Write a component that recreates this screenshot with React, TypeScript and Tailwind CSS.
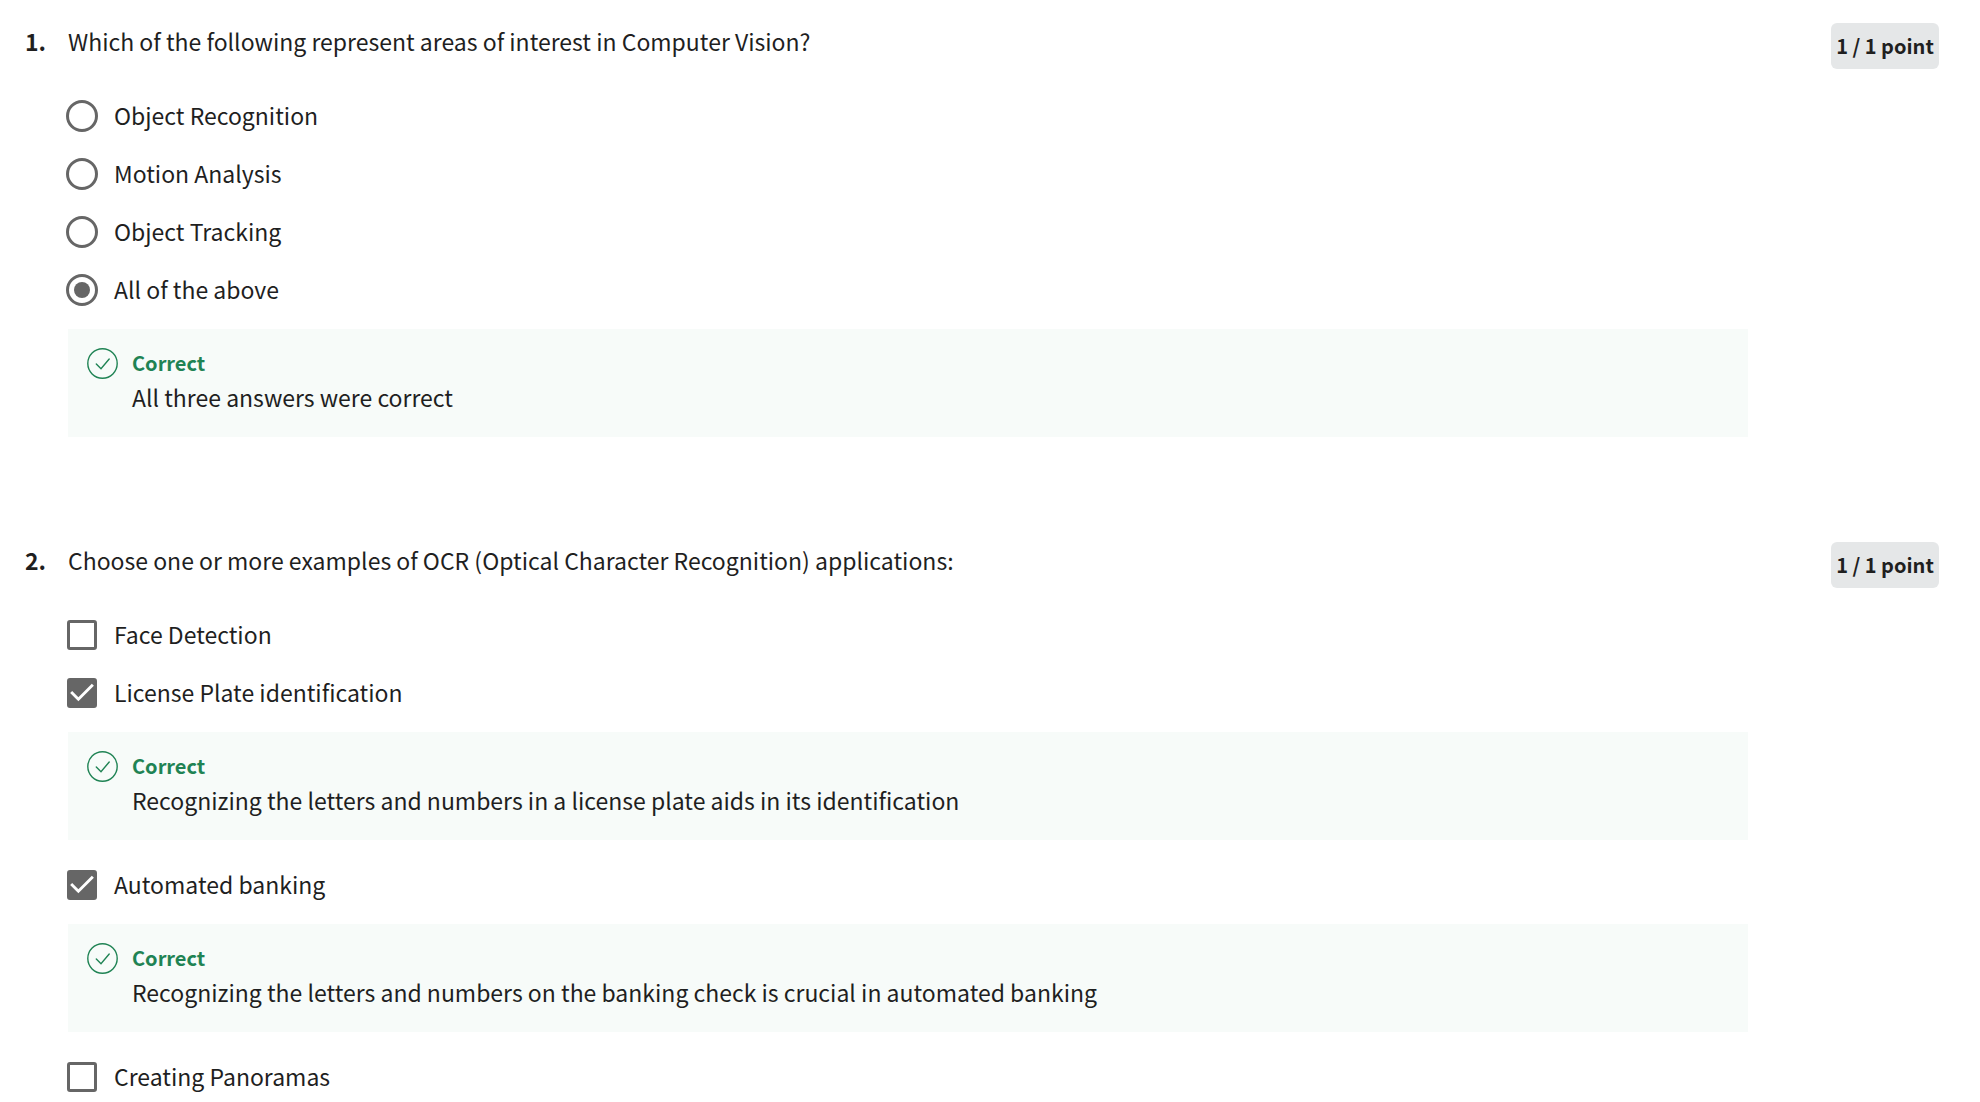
import React from "react";

type Option = { label: string; checked?: boolean; feedback?: string };
type Question = {
  prompt: string;
  kind: "radio" | "checkbox";
  options: Option[];
};

const questions: Question[] = [
  {
    prompt: "Which of the following represent areas of interest in Computer Vision?",
    kind: "radio",
    options: [
      { label: "Object Recognition" },
      { label: "Motion Analysis" },
      { label: "Object Tracking" },
      { label: "All of the above", checked: true, feedback: "All three answers were correct" },
    ],
  },
  {
    prompt: "Choose one or more examples of OCR (Optical Character Recognition) applications:",
    kind: "checkbox",
    options: [
      { label: "Face Detection" },
      {
        label: "License Plate identification",
        checked: true,
        feedback: "Recognizing the letters and numbers in a license plate aids in its identification",
      },
      {
        label: "Automated banking",
        checked: true,
        feedback:
          "Recognizing the letters and numbers on the banking check is crucial in automated banking",
      },
      { label: "Creating Panoramas" },
    ],
  },
];

function Feedback({ text }: { text: string }) {
  return (
    <div className="mt-[10px] mb-4 ml-0.5 flex gap-[14px] bg-[#f7fbf9] px-[19px] pt-[19px] pb-[21px]">
      <svg viewBox="0 0 31 31" className="h-[31px] w-[31px] shrink-0 text-[#1f8354]" fill="none" stroke="currentColor" strokeWidth="1.4" strokeLinecap="round" aria-hidden="true">
        <circle cx="15.5" cy="15.5" r="14.7" />
        <path d="M9.300 16L14 20.700L22.200 11" />
      </svg>
      <div>
        <p className="text-[20px] leading-[30px] font-bold text-[#1f8354]">Correct</p>
        <p className="text-[23px] leading-[38px]">{text}</p>
      </div>
    </div>
  );
}

function Choice({ kind, name, option }: { kind: "radio" | "checkbox"; name: string; option: Option }) {
  return (
    <label className="flex h-[58px] items-center gap-4">
      <span className="grid h-8 w-8 shrink-0 place-items-center">
        <input
          type={kind}
          name={name}
          defaultChecked={option.checked}
          className={
            kind === "radio"
              ? "peer col-start-1 row-start-1 h-8 w-8 appearance-none rounded-full border-3 border-[#666]"
              : "peer col-start-1 row-start-1 h-[30px] w-[30px] appearance-none rounded-[3px] border-3 border-[#666] checked:bg-[#666]"
          }
        />
        {kind === "radio" ? (
          <span className="pointer-events-none col-start-1 row-start-1 hidden h-4 w-4 rounded-full bg-[#666] peer-checked:block" />
        ) : (
          <svg viewBox="0 0 29 29" className="pointer-events-none col-start-1 row-start-1 hidden h-[30px] w-[30px] peer-checked:block" fill="none" stroke="#fff" strokeWidth="2.800" aria-hidden="true">
            <path d="M4 13.500L11 20.500L25 6.500" />
          </svg>
        )}
      </span>
      <span className="pb-0.5 text-[23px] leading-[38px]">{option.label}</span>
    </label>
  );
}

export default function App() {
  return (
    <main className="min-h-screen bg-white pt-[23px] pr-[41px] pl-[25px] font-['Noto_Sans_CJK_SC',sans-serif] text-[#1f1f1f]">
      {questions.map((q, i) => (
        <section key={q.prompt} className="flex items-start pb-[89px] last:pb-0">
          <div className="w-[41px] shrink-0 text-[23px] leading-[36px] font-bold">{i + 1}.</div>
          <fieldset className="min-w-0 flex-1 pr-[83px]">
            <legend className="mb-7 pl-0.5 text-[23px] leading-[36px]">{q.prompt}</legend>
            {q.options.map((o) => (
              <div key={o.label}>
                <Choice kind={q.kind} name={`question-${i + 1}`} option={o} />
                {o.feedback && <Feedback text={o.feedback} />}
              </div>
            ))}
          </fieldset>
          <div className="flex h-[46px] w-[108px] shrink-0 items-center justify-center rounded-md bg-[#e5e7e8] text-[20px] font-bold whitespace-nowrap">
            1 / 1 point
          </div>
        </section>
      ))}
    </main>
  );
}
